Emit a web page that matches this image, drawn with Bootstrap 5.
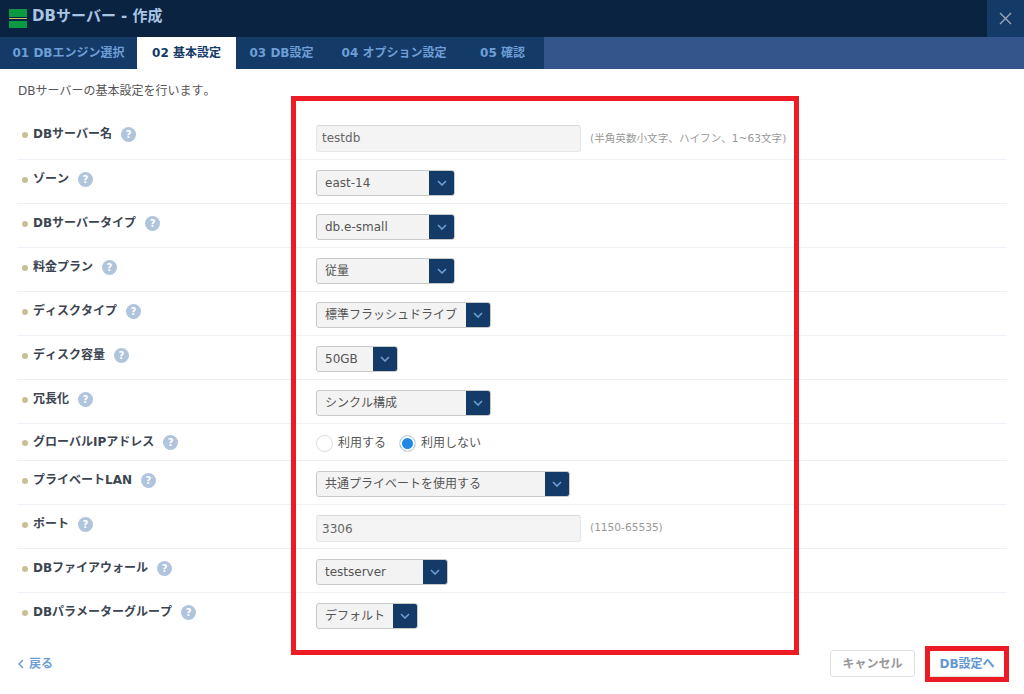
<!DOCTYPE html>
<html lang="ja">
<head>
<meta charset="utf-8">
<title>DBサーバー - 作成</title>
<link rel="stylesheet" href="https://cdn.jsdelivr.net/npm/bootstrap@5.3.0/dist/css/bootstrap.min.css">
<style>
html,body{height:694px;overflow:hidden}
body{font-family:"DejaVu Sans","Noto Sans CJK JP",sans-serif;font-size:12px;color:#555;background:#fff;position:relative;font-kerning:none}
.dlg-head{height:37px;background:#0a2340;color:#a9c4e4;font-size:15px;font-weight:700;padding-left:9px}
.dlg-title{margin-top:-5px;padding-left:0}
.dlg-logo{width:18px;height:19px;margin-right:5px;flex:none}
.dlg-close{width:37px;height:37px;background:#143a68;flex:none}
.tabbar{height:32px;background:#34558b}
.tabset{background:#143a68}
.tabitem{height:32px;color:#6d9fd6;font-weight:700;font-size:12px;text-decoration:none}
.tabitem.on{background:#fff;color:#143a68}
.tw1{width:137px}.tw2{width:99px}.tw3{width:91px}.tw4{width:134px}.tw5{width:83px}
.intro{margin:0;padding:15px 18px 0;height:47px;line-height:15px;color:#555}
.formlist{margin:0 17px 0 17px;padding:0;list-style:none}
.frow{height:44px;border-bottom:1px solid #edf1f7;padding-top:10px}
.frow.short{height:37px;padding-top:10px}
.frow.nob{border-bottom:0}
.flabel{width:299px;flex:none;padding-left:5px;font-weight:700;color:#3b4450;line-height:17px;margin-top:1px}
.frow.top .flabel,.frow.short .flabel{margin-top:0}
.ldot{width:6px;height:6px;border-radius:50%;background:#c8c093;margin-right:5px;flex:none}
.qmark{width:15px;height:15px;border-radius:50%;background:#b0c4dc;color:#fff;font-size:10px;line-height:15px;text-align:center;margin-left:9px;flex:none;font-weight:700}
.tinput{width:265px;height:27px;background:#f4f4f4;border:1px solid #e6e6e6;border-top-color:#d9d9d9;border-radius:3px;padding-left:5px;line-height:27px;color:#666}
.frow.top .tinput{margin-top:-1px;line-height:25px}
.hinttext{color:#999;font-size:10.6px;margin-left:9px;padding-bottom:8px}
.sel{height:26px;border:1px solid #c9c9c9;border-radius:3px;background:#f3f3f3;color:#555;overflow:hidden}
.sel-text{flex:1;padding-left:8px;line-height:24px;white-space:nowrap;overflow:hidden}
.sel-btn{width:24px;background:#143a68;flex:none}
.w138{width:139px}.w174{width:175px}.w81{width:82px}.w253{width:254px}.w131{width:132px}.w101{width:102px}
.w138 .sel-btn{width:25px}
.rdo{width:17px;height:17px;border-radius:50%;border:1px solid #ddd;background:#fff;margin-right:5px;flex:none}
.rdo.sel-on{background:#1f88e5;box-shadow:inset 0 0 0 2px #fff}
.rdo-wrap{margin-right:13px;color:#555}
.dlg-foot{margin:0 19px 0 18px;padding-top:13px}
.backlink{color:#6d9fd6;font-weight:700;text-decoration:none}
.backchev{margin-right:5px}
.cancelbtn{width:85px;height:27px;border:1px solid #e0e0e0;border-radius:3px;background:#fff;color:#999;font-weight:700;font-size:12px;padding:0}
.nextbtn{width:76px;height:27px;border:1px solid #e0e0e0;border-radius:3px;background:#fff;color:#5f97d3;font-weight:700;font-size:12px;padding:0;margin-left:14px}
.redframe{position:absolute;border:5px solid #ed1c24;pointer-events:none}
.rf1{left:291px;top:96px;width:508px;height:559px}
.rf2{left:925px;top:646px;width:84px;height:36px}
</style>
</head>
<body>
<header class="dlg-head d-flex align-items-center">
  <svg class="dlg-logo" viewBox="0 0 18 19"><rect width="18" height="8" fill="#0a9a44"/><rect y="9" width="18" height="1" fill="#c9bf5a"/><rect y="12" width="18" height="7" fill="#0a9a44"/></svg>
  <span class="dlg-title flex-grow-1">DBサーバー - 作成</span>
  <div class="dlg-close d-flex align-items-center justify-content-center">
    <svg width="13" height="13" viewBox="0 0 13 13"><path d="M1 1l11 11M12 1L1 12" stroke="#9aa8b8" stroke-width="1.4" fill="none"/></svg>
  </div>
</header>
<nav class="tabbar d-flex">
  <div class="tabset d-flex">
    <a class="tabitem tw1 d-flex align-items-center justify-content-center" href="#">01 DBエンジン選択</a>
    <a class="tabitem tw2 on d-flex align-items-center justify-content-center" href="#">02 基本設定</a>
    <a class="tabitem tw3 d-flex align-items-center justify-content-center" href="#">03 DB設定</a>
    <a class="tabitem tw4 d-flex align-items-center justify-content-center" href="#">04 オプション設定</a>
    <a class="tabitem tw5 d-flex align-items-center justify-content-center" href="#">05 確認</a>
  </div>
</nav>
<p class="intro">DBサーバーの基本設定を行います。</p>
<ul class="formlist">
  <li class="frow top d-flex"><div class="flabel d-flex align-items-center align-self-start"><i class="ldot"></i>DBサーバー名<span class="qmark">?</span></div><div class="tinput">testdb</div><span class="hinttext align-self-center">(半角英数小文字、ハイフン、1~63文字)</span></li>
  <li class="frow d-flex"><div class="flabel d-flex align-items-center align-self-start"><i class="ldot"></i>ゾーン<span class="qmark">?</span></div><div class="sel w138 d-flex"><span class="sel-text">east-14</span><span class="sel-btn d-flex align-items-center justify-content-center"><svg width="10" height="6" viewBox="0 0 10 6"><path d="M1 1l4 4 4-4" stroke="#6d9fd6" stroke-width="1.6" fill="none"/></svg></span></div></li>
  <li class="frow d-flex"><div class="flabel d-flex align-items-center align-self-start"><i class="ldot"></i>DBサーバータイプ<span class="qmark">?</span></div><div class="sel w138 d-flex"><span class="sel-text">db.e-small</span><span class="sel-btn d-flex align-items-center justify-content-center"><svg width="10" height="6" viewBox="0 0 10 6"><path d="M1 1l4 4 4-4" stroke="#6d9fd6" stroke-width="1.6" fill="none"/></svg></span></div></li>
  <li class="frow d-flex"><div class="flabel d-flex align-items-center align-self-start"><i class="ldot"></i>料金プラン<span class="qmark">?</span></div><div class="sel w138 d-flex"><span class="sel-text">従量</span><span class="sel-btn d-flex align-items-center justify-content-center"><svg width="10" height="6" viewBox="0 0 10 6"><path d="M1 1l4 4 4-4" stroke="#6d9fd6" stroke-width="1.6" fill="none"/></svg></span></div></li>
  <li class="frow d-flex"><div class="flabel d-flex align-items-center align-self-start"><i class="ldot"></i>ディスクタイプ<span class="qmark">?</span></div><div class="sel w174 d-flex"><span class="sel-text">標準フラッシュドライブ</span><span class="sel-btn d-flex align-items-center justify-content-center"><svg width="10" height="6" viewBox="0 0 10 6"><path d="M1 1l4 4 4-4" stroke="#6d9fd6" stroke-width="1.6" fill="none"/></svg></span></div></li>
  <li class="frow d-flex"><div class="flabel d-flex align-items-center align-self-start"><i class="ldot"></i>ディスク容量<span class="qmark">?</span></div><div class="sel w81 d-flex"><span class="sel-text">50GB</span><span class="sel-btn d-flex align-items-center justify-content-center"><svg width="10" height="6" viewBox="0 0 10 6"><path d="M1 1l4 4 4-4" stroke="#6d9fd6" stroke-width="1.6" fill="none"/></svg></span></div></li>
  <li class="frow d-flex"><div class="flabel d-flex align-items-center align-self-start"><i class="ldot"></i>冗長化<span class="qmark">?</span></div><div class="sel w174 d-flex"><span class="sel-text">シンクル構成</span><span class="sel-btn d-flex align-items-center justify-content-center"><svg width="10" height="6" viewBox="0 0 10 6"><path d="M1 1l4 4 4-4" stroke="#6d9fd6" stroke-width="1.6" fill="none"/></svg></span></div></li>
  <li class="frow short d-flex"><div class="flabel d-flex align-items-center align-self-start"><i class="ldot"></i>グローバルIPアドレス<span class="qmark">?</span></div><div class="d-flex align-items-center align-self-start"><span class="rdo-wrap d-flex align-items-center"><i class="rdo"></i>利用する</span><span class="rdo-wrap d-flex align-items-center"><i class="rdo sel-on"></i>利用しない</span></div></li>
  <li class="frow d-flex"><div class="flabel d-flex align-items-center align-self-start"><i class="ldot"></i>プライベートLAN<span class="qmark">?</span></div><div class="sel w253 d-flex"><span class="sel-text">共通プライベートを使用する</span><span class="sel-btn d-flex align-items-center justify-content-center"><svg width="10" height="6" viewBox="0 0 10 6"><path d="M1 1l4 4 4-4" stroke="#6d9fd6" stroke-width="1.6" fill="none"/></svg></span></div></li>
  <li class="frow d-flex"><div class="flabel d-flex align-items-center align-self-start"><i class="ldot"></i>ポート<span class="qmark">?</span></div><div class="tinput">3306</div><span class="hinttext align-self-center">(1150-65535)</span></li>
  <li class="frow d-flex"><div class="flabel d-flex align-items-center align-self-start"><i class="ldot"></i>DBファイアウォール<span class="qmark">?</span></div><div class="sel w131 d-flex"><span class="sel-text">testserver</span><span class="sel-btn d-flex align-items-center justify-content-center"><svg width="10" height="6" viewBox="0 0 10 6"><path d="M1 1l4 4 4-4" stroke="#6d9fd6" stroke-width="1.6" fill="none"/></svg></span></div></li>
  <li class="frow nob d-flex"><div class="flabel d-flex align-items-center align-self-start"><i class="ldot"></i>DBパラメーターグループ<span class="qmark">?</span></div><div class="sel w101 d-flex"><span class="sel-text">デフォルト</span><span class="sel-btn d-flex align-items-center justify-content-center"><svg width="10" height="6" viewBox="0 0 10 6"><path d="M1 1l4 4 4-4" stroke="#6d9fd6" stroke-width="1.6" fill="none"/></svg></span></div></li>
</ul>
<footer class="dlg-foot d-flex justify-content-between align-items-center">
  <a class="backlink d-flex align-items-center" href="#"><svg class="backchev" width="6" height="10" viewBox="0 0 6 10"><path d="M5 1L1 5l4 4" stroke="#6d9fd6" stroke-width="1.5" fill="none"/></svg>戻る</a>
  <div class="d-flex">
    <button class="cancelbtn" type="button">キャンセル</button>
    <button class="nextbtn" type="button">DB設定へ</button>
  </div>
</footer>
<div class="redframe rf1"></div>
<div class="redframe rf2"></div>
<script src="https://cdn.jsdelivr.net/npm/bootstrap@5.3.0/dist/js/bootstrap.bundle.min.js"></script>
</body>
</html>
